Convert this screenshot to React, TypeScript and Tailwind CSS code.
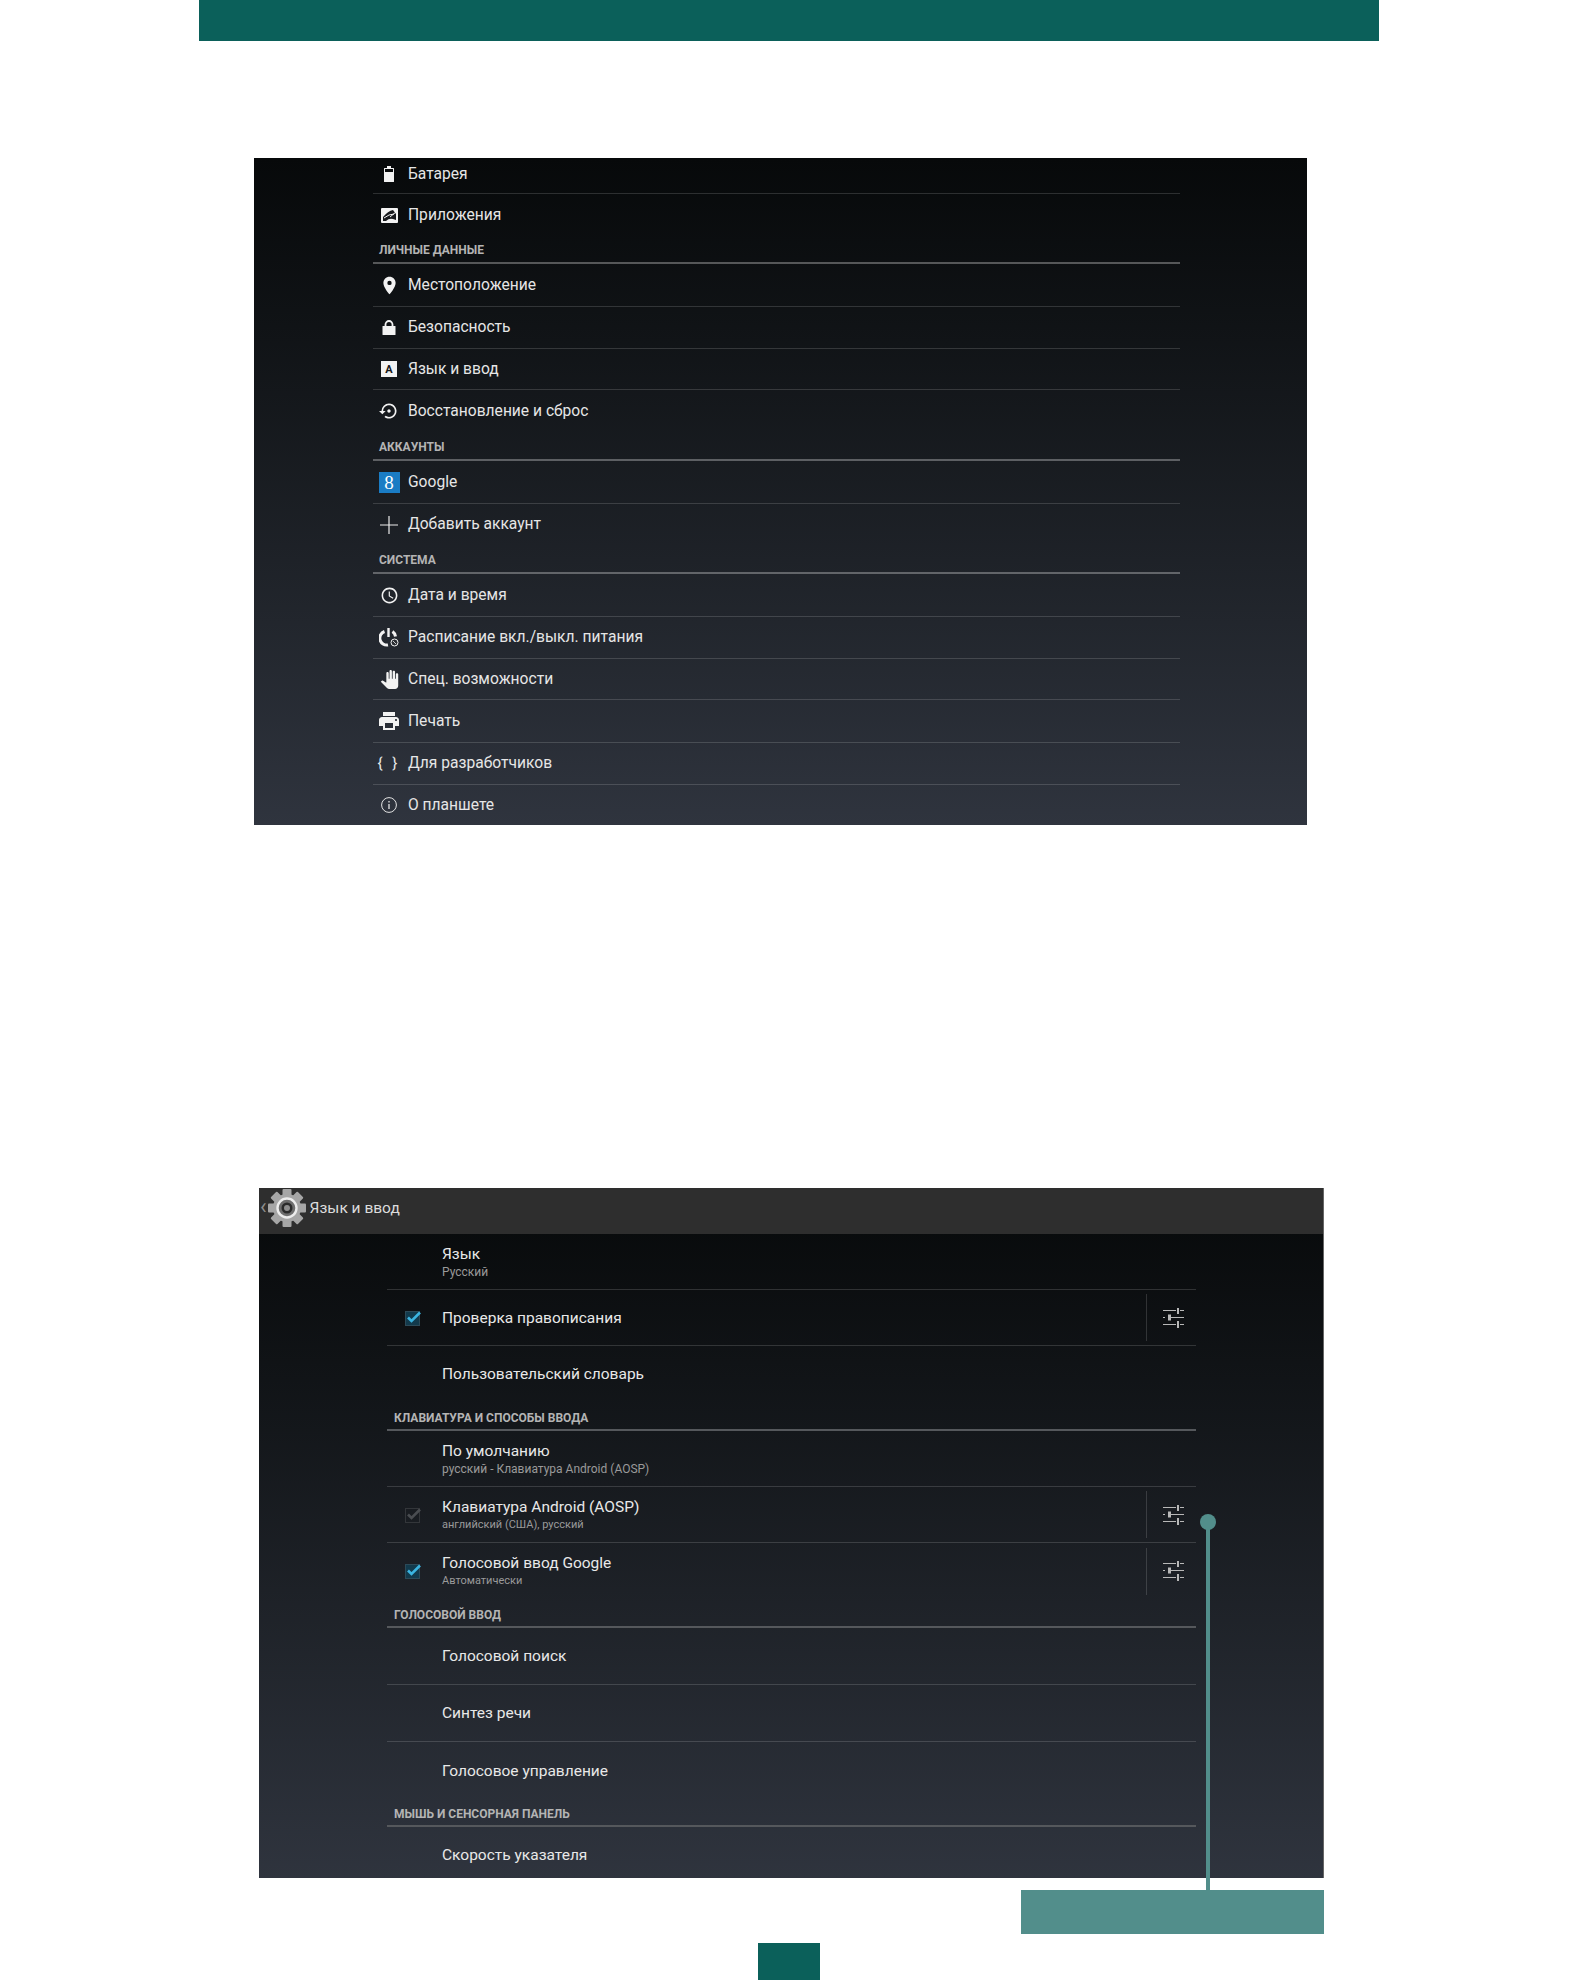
import { ReactNode } from "react";
import { MdAccessTime, MdLocationOn, MdPanTool, MdPrint, MdSettingsBackupRestore } from "react-icons/md";

const BatteryIcon = () => (
  <svg width="10" height="16" viewBox="0 0 10 16" fill="#f2f2f2">
    <path d="M3 0h4v2h2.500a.5.5 0 0 1 .5.500V15.500a.5.5 0 0 1-.5.500H.5a.5.5 0 0 1-.5-.500V2.500A.5.5 0 0 1 .5 2H3zM1 3v3h8V3z" fillRule="evenodd" />
  </svg>
);

const AppsIcon = () => (
  <svg width="17" height="15" viewBox="0 0 17 15">
    <rect width="17" height="15" rx="1" fill="#f2f2f2" />
    <path d="M2 13 L2 9 Q7 3 12 2 L15 6 L15 12 L12 11 Q8 10 5 13z" fill="#17191c" />
    <path d="M3 10 Q8 6 13 6 M9 9 L15 4" stroke="#f2f2f2" strokeWidth="1" fill="none" />
  </svg>
);

const LockIcon = () => (
  <svg width="14" height="15" viewBox="0 0 14 15" fill="none">
    <rect y="6" width="13" height="9" rx="0.5" x="0.500" fill="#f2f2f2" />
    <path d="M3.500 7V4.500a3.500 3.500 0 0 1 7 0V7" stroke="#f2f2f2" strokeWidth="1.800" />
  </svg>
);

const PlusIcon = () => (
  <svg width="18" height="18" viewBox="0 0 18 18" stroke="#ececec" strokeWidth="1.200">
    <path d="M0 9h18M9 0v18" />
  </svg>
);

const InfoIcon = () => (
  <svg width="16" height="16" viewBox="0 0 16 16" fill="none" stroke="#e4e4e4">
    <circle cx="8" cy="8" r="7.400" strokeWidth="1" />
    <path d="M8 7v5" strokeWidth="1.300" />
    <path d="M8 4v1.400" strokeWidth="1.300" />
  </svg>
);

const LangIcon = () => (
  <div className="flex h-[16px] w-[16px] items-center justify-center bg-[#f2f2f2] text-[11px] font-bold leading-none text-[#15171a]">
    A
  </div>
);

const GoogleIcon = () => (
  <div className="flex h-[21px] w-[21px] items-center justify-center bg-[#1a7cc4] font-['Liberation_Serif',serif] text-[19px] leading-none text-white">
    8
  </div>
);

const PowerIcon = () => (
  <svg width="20" height="19" viewBox="0 0 20 19" fill="none" stroke="#f2f2f2">
    <path d="M5.500 3.500a7 7 0 0 0 3.500 13.500" strokeWidth="3" />
    <path d="M13.500 3.500a7 7 0 0 1 3 5" strokeWidth="3" />
    <path d="M9.500 0v9" strokeWidth="2.400" />
    <circle cx="15.500" cy="14.500" r="3.500" strokeWidth="1" fill="#2a2d32" />
    <path d="M14 13l3 3" strokeWidth="0.800" />
  </svg>
);

const SlidersIcon = () => (
  <svg width="21" height="21" viewBox="0 0 21 21" fill="none" stroke="#b8b8b8">
    <path d="M0 2.500h13M17 2.500h4M0 9.500h2M8 9.500h13M0 16.500h13M17 16.500h4" strokeWidth="1" />
    <path d="M15 0v6M15 13v7" strokeWidth="2" />
    <path d="M6.500 6.500v6" strokeWidth="3" />
  </svg>
);

const Checkbox = ({ dim }: { dim?: boolean }) => (
  <svg width="17" height="16" viewBox="0 0 17 16" fill="none">
    <rect x="0.500" y="1.500" width="14" height="14" fill={dim ? "none" : "#123a4c"} stroke={dim ? "#33363a" : "#2c4a58"} />
    <path d="M3 7.500l3.500 3.500L15 2.500" stroke={dim ? "#4a4d51" : "#3bb4e0"} strokeWidth="2.600" />
  </svg>
);

const GearIcon = () => (
  <svg width="38" height="38" viewBox="0 0 38 38" fill="none">
    {[0, 45, 90, 135].map((deg) => (
      <rect key={deg} x="14.500" y="0" width="9" height="38" rx="1" fill="#a6a6a6" transform={`rotate(${deg} 19 19)`} />
    ))}
    <circle cx="19" cy="19" r="14" fill="#a6a6a6" />
    <circle cx="19" cy="19" r="9.500" fill="#6e6e6e" stroke="#ececec" strokeWidth="2.400" />
    <circle cx="19" cy="19" r="5.500" fill="#2b2b2b" />
    <circle cx="19" cy="19" r="3" fill="#8e8e8e" />
  </svg>
);

type Item = { kind: "row" | "head"; label: string; icon?: ReactNode; h: string; line?: boolean };

const mdClass = "text-[#f2f2f2]";

const firstList: Item[] = [
  { kind: "row", label: "Батарея", icon: <BatteryIcon />, h: "h-[36px] pb-[3px]", line: true },
  { kind: "row", label: "Приложения", icon: <AppsIcon />, h: "h-[42px]" },
  { kind: "head", label: "ЛИЧНЫЕ ДАННЫЕ", h: "h-[28px]" },
  { kind: "row", label: "Местоположение", icon: <MdLocationOn size={21} className={mdClass} />, h: "h-[43px]", line: true },
  { kind: "row", label: "Безопасность", icon: <LockIcon />, h: "h-[42px]", line: true },
  { kind: "row", label: "Язык и ввод", icon: <LangIcon />, h: "h-[41px]", line: true },
  { kind: "row", label: "Восстановление и сброс", icon: <MdSettingsBackupRestore size={20} className={mdClass} />, h: "h-[42px]" },
  { kind: "head", label: "АККАУНТЫ", h: "h-[29px]" },
  { kind: "row", label: "Google", icon: <GoogleIcon />, h: "h-[43px]", line: true },
  { kind: "row", label: "Добавить аккаунт", icon: <PlusIcon />, h: "h-[41px]" },
  { kind: "head", label: "СИСТЕМА", h: "h-[29px]" },
  { kind: "row", label: "Дата и время", icon: <MdAccessTime size={19} className={mdClass} />, h: "h-[43px]", line: true },
  { kind: "row", label: "Расписание вкл./выкл. питания", icon: <PowerIcon />, h: "h-[42px]", line: true },
  { kind: "row", label: "Спец. возможности", icon: <MdPanTool size={19} className={mdClass} />, h: "h-[41px]", line: true },
  { kind: "row", label: "Печать", icon: <MdPrint size={24} className={mdClass} />, h: "h-[43px]", line: true },
  { kind: "row", label: "Для разработчиков", icon: <span className="text-[15px] tracking-[3px] text-[#e8e8e8]">{"{ }"}</span>, h: "h-[42px]", line: true },
  { kind: "row", label: "О планшете", icon: <InfoIcon />, h: "h-[40px]" },
];

type LangRow = {
  title: string;
  sub?: string;
  subSize?: string;
  check?: "on" | "dim";
  sliders?: boolean;
  line?: boolean;
  h?: string;
};

const FirstRow = ({ item }: { item: Item }) => {
  if (item.kind === "head") {
    return (
      <div className={`flex items-end border-b-2 border-white/30 pb-[3px] pl-[6px] text-[12px] font-bold leading-none text-[#b4b4b4] ${item.h}`}>
        <span className="pb-[3px]">{item.label}</span>
      </div>
    );
  }
  return (
    <div className={`flex items-center text-[15.600px] text-[#e6e6e6] ${item.h} ${item.line ? "border-b border-white/15" : ""}`}>
      <div className="flex w-[35px] shrink-0 justify-center pr-[3px]">{item.icon}</div>
      <span className="pt-px">{item.label}</span>
    </div>
  );
};

const SecondRow = ({ row }: { row: LangRow }) => (
  <div className={`flex items-center ${row.h ?? "h-[56px]"} ${row.line ? "border-b border-white/15" : ""}`}>
    <div className="flex w-[55px] shrink-0 justify-center pr-[3px]">
      {row.check && <Checkbox dim={row.check === "dim"} />}
    </div>
    <div className="flex flex-1 flex-col">
      <span className="text-[15.500px] leading-[20px] text-[#e8e8e8]">{row.title}</span>
      {row.sub && <span className={`leading-[16px] text-[#9a9a9a] ${row.subSize ?? "text-[11px]"}`}>{row.sub}</span>}
    </div>
    {row.sliders && (
      <div className="flex h-[47px] w-[50px] items-center justify-center border-l border-white/15 pl-[3px] pt-px">
        <SlidersIcon />
      </div>
    )}
  </div>
);

const panelTwo: { head?: string; headH?: string; rows: LangRow[] }[] = [
  {
    rows: [
      { title: "Язык", sub: "Русский", subSize: "text-[12px]", line: true },
      { title: "Проверка правописания", check: "on", sliders: true, line: true },
      { title: "Пользовательский словарь" },
    ],
  },
  {
    head: "КЛАВИАТУРА И СПОСОБЫ ВВОДА",
    headH: "h-[29px]",
    rows: [
      { title: "По умолчанию", sub: "русский - Клавиатура Android (AOSP)", subSize: "text-[12px]", line: true },
      { title: "Клавиатура Android (AOSP)", sub: "английский (США), русский", check: "dim", sliders: true, line: true },
      { title: "Голосовой ввод Google", sub: "Автоматически", check: "on", sliders: true },
    ],
  },
  {
    head: "ГОЛОСОВОЙ ВВОД",
    headH: "h-[29px]",
    rows: [
      { title: "Голосовой поиск", line: true, h: "h-[57px]" },
      { title: "Синтез речи", line: true, h: "h-[57px]" },
      { title: "Голосовое управление", h: "h-[57px]" },
    ],
  },
  {
    head: "МЫШЬ И СЕНСОРНАЯ ПАНЕЛЬ",
    headH: "h-[28px]",
    rows: [{ title: "Скорость указателя" }],
  },
];

export default function App() {
  return (
    <div className="relative h-[1980px] w-[1578px] overflow-hidden bg-white font-['Roboto',sans-serif]">
      <div className="ml-[199px] h-[41px] w-[1180px] bg-[#0b605a]" />

      <div className="ml-[254px] mt-[117px] h-[667px] w-[1053px] overflow-hidden bg-gradient-to-b from-[#07090a] to-[#2f343e] pl-[119px]">
        <div className="w-[807px]">
          {firstList.map((item) => (
            <FirstRow key={item.label} item={item} />
          ))}
        </div>
      </div>

      <div className="relative ml-[259px] mt-[363px] w-[1065px]">
        <div className="h-[690px] overflow-hidden border-r border-[#666] bg-gradient-to-b from-[#07090a] to-[#2f343e]">
          <div className="flex h-[46px] items-start bg-[#2e2e2e]">
            <span className="pl-[1px] pt-[4px] text-[22px] leading-[30px] text-[#8c8c8c]">‹</span>
            <div className="ml-[1px] pt-px">
              <GearIcon />
            </div>
            <span className="ml-[4px] text-[15.500px] leading-[40px] text-[#dcdcdc]">Язык и ввод</span>
          </div>
          <div className="ml-[128px] w-[809px]">
            {panelTwo.map((group) => (
              <div key={group.rows[0].title}>
                {group.head && (
                  <div className={`flex items-end border-b-2 border-[#55585c] pb-[5px] pl-[7px] text-[12px] font-bold leading-none text-[#b4b4b4] ${group.headH}`}>
                    {group.head}
                  </div>
                )}
                {group.rows.map((row) => (
                  <SecondRow key={row.title} row={row} />
                ))}
              </div>
            ))}
          </div>
        </div>

        {/* leader from the sliders down to the caption box */}
        <div className="absolute left-[941px] top-[326px] h-[16px] w-[16px] rounded-full bg-[#528e8b]" />
        <div className="absolute left-[947px] top-[340px] h-[362px] w-[4px] bg-[#528e8b]" />

        <div className="ml-[762px] mt-[12px] h-[44px] w-[303px] bg-[#528e8b]" />
      </div>

      <div className="ml-[758px] mt-[9px] h-[37px] w-[62px] bg-[#0b605a]" />
    </div>
  );
}
